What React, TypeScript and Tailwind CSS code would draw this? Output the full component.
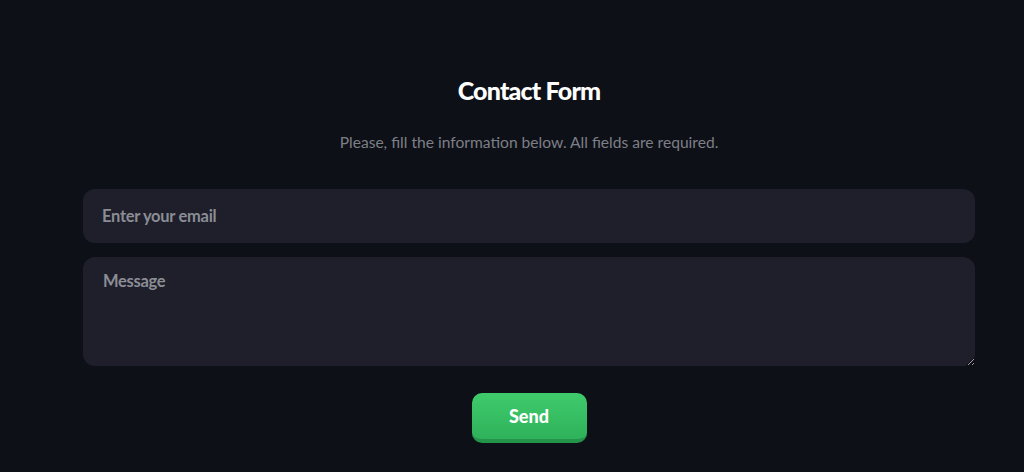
import React from "react";

export default function App() {
  return (
    <div className="min-h-[472px] w-full bg-[#0e1017] pl-[83px] pr-[49px] pt-[73px] font-['Lato',sans-serif]">
      <div className="flex flex-col items-center">
        <h1 className="h-[34px] text-[25px] font-black leading-[34px] tracking-[-0.8px] text-white">Contact Form</h1>
        <p className="mt-[23px] h-[24px] text-[15.6px] leading-[24px] text-[#7d7f87]">
          Please, fill the information below. All fields are required.
        </p>
        <input
          type="email"
          placeholder="Enter your email"
          className="mt-[35px] h-[54px] w-full rounded-[12px] bg-[#1e1f2a] px-[19px] text-[16.5px] font-bold tracking-[-0.3px] text-white outline-none placeholder:text-[#8b8d95]"
        />
        <textarea
          placeholder="Message"
          className="mt-[14px] h-[109px] w-full rounded-[12px] bg-[#1e1f2a] px-[20px] py-[12px] text-[16.5px] font-bold tracking-[-0.3px] text-white outline-none placeholder:text-[#8b8d95]"
        />
        <button className="mt-[27px] h-[50px] w-[115px] rounded-[10px] border-b-[4px] border-[#24944b] bg-gradient-to-b from-[#3fcb6c] to-[#2fb25a] text-[18px] font-black text-white">
          Send
        </button>
      </div>
    </div>
  );
}
